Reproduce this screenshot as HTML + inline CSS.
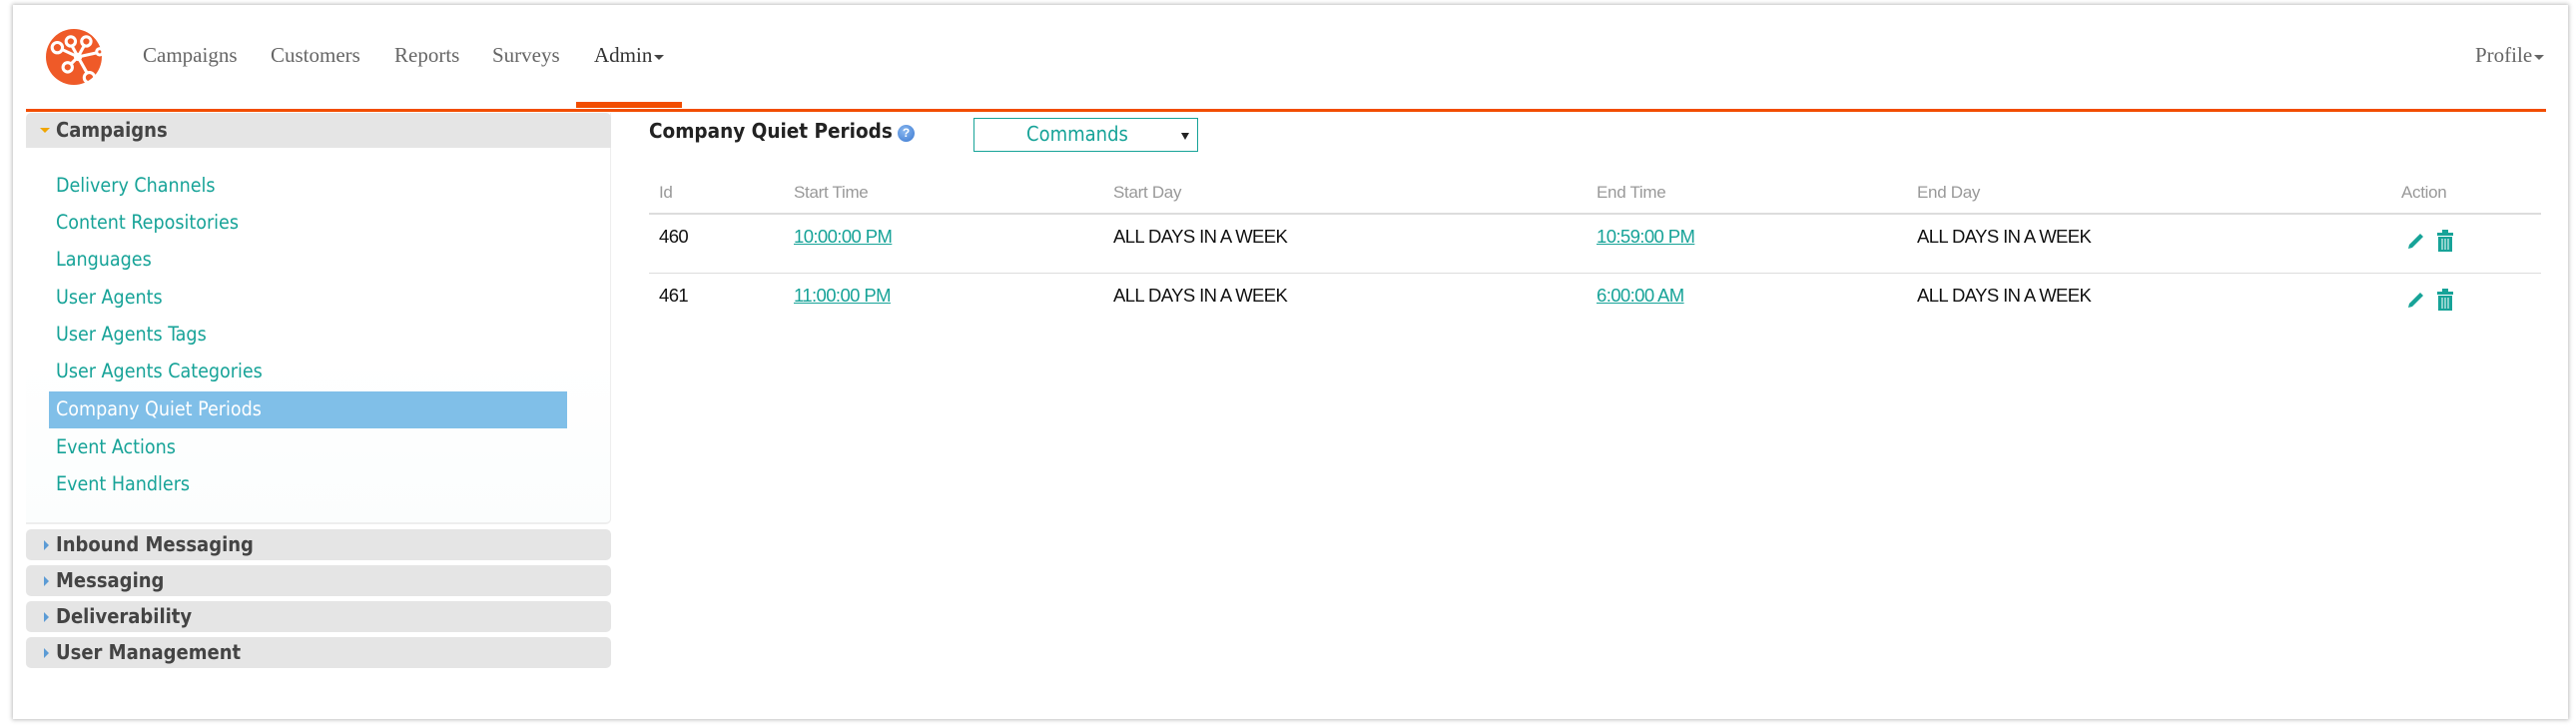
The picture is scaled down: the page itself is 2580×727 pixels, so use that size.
<!DOCTYPE html>
<html><head><meta charset="utf-8"><style>
*{margin:0;padding:0;box-sizing:border-box}
body{width:2580px;height:727px;background:#fff;position:relative;overflow:hidden;font-family:"Liberation Sans",sans-serif}
.card{position:absolute;left:13px;top:5px;width:2559px;height:715px;background:#fff;box-shadow:0 0 4px 1px rgba(0,0,0,.25)}
.abs{position:absolute;white-space:nowrap}
.nav{font-family:"Liberation Serif",serif;font-size:21px;color:#666;top:43px}
.caret{display:inline-block;width:0;height:0;border-left:5px solid transparent;border-right:5px solid transparent;border-top:5px solid #666;vertical-align:middle;margin-left:2px}
.sl{position:absolute;left:56px;font-size:19.5px;color:#17a398;font-family:"DejaVu Sans Condensed","DejaVu Sans",sans-serif;white-space:nowrap}
.hdr{position:absolute;left:26px;width:586px;background:#e5e5e5;border-radius:5px;font-family:"DejaVu Sans Condensed","DejaVu Sans",sans-serif;font-weight:bold;font-size:20px;color:#444;padding-left:30px;line-height:31px;height:31px}
.tri{position:absolute;left:18px;top:11px;width:0;height:0;border-top:5px solid transparent;border-bottom:5px solid transparent;border-left:5px solid #5b9bd5}
.th{position:absolute;top:183px;font-size:17px;color:#999;letter-spacing:-.3px}
.td{position:absolute;font-size:18.5px;color:#111;letter-spacing:-.6px}
.lk{color:#17a398;text-decoration:underline}
</style></head><body>
<div class="card"></div>
<svg class="abs" style="left:46px;top:28px" width="58" height="58" viewBox="0 0 56 56">
<circle cx="27" cy="28" r="27" fill="#ef5a28"/>
<g stroke="#fff" stroke-width="3" fill="none">
<circle cx="11" cy="19" r="5"/><circle cx="24" cy="13" r="4.5"/><circle cx="39" cy="13" r="4.5"/><circle cx="21" cy="38" r="4.5"/><circle cx="42" cy="48" r="5"/><circle cx="52" cy="23" r="3"/>
<path d="M16 21 L31 28 M25 17 L31 28 M37 17 L31 28 M24 35 L31 28 M31 28 L40 44 M31 28 L49 24"/>
</g><circle cx="31" cy="28" r="4" fill="#fff"/></svg>
<div class="abs nav" style="left:143px">Campaigns</div>
<div class="abs nav" style="left:271px">Customers</div>
<div class="abs nav" style="left:395px">Reports</div>
<div class="abs nav" style="left:493px">Surveys</div>
<div class="abs nav" style="left:595px;color:#333">Admin<span class="caret" style="border-top-color:#444"></span></div>
<div class="abs nav" style="left:2479px">Profile<span class="caret"></span></div>
<div class="abs" style="left:577px;top:102px;width:106px;height:6px;background:#f24d00"></div>
<div class="abs" style="left:26px;top:109px;width:2524px;height:3px;background:#f24d00"></div>

<div class="abs" style="left:26px;top:113px;width:586px;height:412px;border-right:1px solid #eee;border-bottom:2px solid #eee;border-radius:0 0 5px 0;background:linear-gradient(#fff 60%,#fbfdfd)"></div>
<div class="hdr" style="top:113px;height:35px;line-height:35px;border-radius:5px 5px 0 0"><div style="position:absolute;left:14px;top:15px;border-left:5px solid transparent;border-right:5px solid transparent;border-top:5px solid #f0a500"></div>Campaigns</div>
<div class="sl" style="top:174px">Delivery Channels</div>
<div class="sl" style="top:211px">Content Repositories</div>
<div class="sl" style="top:248px">Languages</div>
<div class="sl" style="top:286px">User Agents</div>
<div class="sl" style="top:323px">User Agents Tags</div>
<div class="abs" style="left:49px;top:392px;width:519px;height:37px;background:#80bfe8"></div>
<div class="sl" style="top:360px">User Agents Categories</div>
<div class="sl" style="top:398px;color:#fff">Company Quiet Periods</div>
<div class="sl" style="top:436px">Event Actions</div>
<div class="sl" style="top:473px">Event Handlers</div>
<div class="hdr" style="top:530px"><div class="tri"></div>Inbound Messaging</div>
<div class="hdr" style="top:566px"><div class="tri"></div>Messaging</div>
<div class="hdr" style="top:602px"><div class="tri"></div>Deliverability</div>
<div class="hdr" style="top:638px"><div class="tri"></div>User Management</div>

<div class="abs" style="left:650px;top:119px;font-family:'DejaVu Sans Condensed','DejaVu Sans',sans-serif;font-weight:bold;font-size:20.5px;color:#222">Company Quiet Periods</div>
<div class="abs" style="left:899px;top:125px;width:17px;height:17px;border-radius:50%;background:radial-gradient(circle at 40% 35%,#8ab8f0,#3a78d0);color:#fff;font-size:12px;font-weight:bold;text-align:center;line-height:17px">?</div>
<div class="abs" style="left:975px;top:118px;width:225px;height:34px;border:1.5px solid #17a398;font-family:'DejaVu Sans Condensed','DejaVu Sans',sans-serif;font-size:20px;color:#17a398;line-height:31px;padding-left:52px">Commands<span style="position:absolute;right:8px;top:14px;border-left:4px solid transparent;border-right:4px solid transparent;border-top:7px solid #222"></span></div>

<div class="th" style="left:660px">Id</div>
<div class="th" style="left:795px">Start Time</div>
<div class="th" style="left:1115px">Start Day</div>
<div class="th" style="left:1599px">End Time</div>
<div class="th" style="left:1920px">End Day</div>
<div class="th" style="left:2405px">Action</div>
<div class="abs" style="left:650px;top:213px;width:1895px;height:2px;background:#ddd"></div>
<div class="abs" style="left:650px;top:273px;width:1895px;height:1px;background:#ddd"></div>
<div class="td" style="left:660px;top:226px">460</div>
<div class="td lk" style="left:795px;top:226px">10:00:00 PM</div>
<div class="td" style="left:1115px;top:226px">ALL DAYS IN A WEEK</div>
<div class="td lk" style="left:1599px;top:226px">10:59:00 PM</div>
<div class="td" style="left:1920px;top:226px">ALL DAYS IN A WEEK</div>
<div class="td" style="left:660px;top:285px">461</div>
<div class="td lk" style="left:795px;top:285px">11:00:00 PM</div>
<div class="td" style="left:1115px;top:285px">ALL DAYS IN A WEEK</div>
<div class="td lk" style="left:1599px;top:285px">6:00:00 AM</div>
<div class="td" style="left:1920px;top:285px">ALL DAYS IN A WEEK</div>

<svg class="abs" style="left:2410px;top:231px" width="20" height="20" viewBox="0 0 20 20"><path d="M2 18 L3 14 L14 3 L17 6 L6 17 Z" fill="#17a398"/></svg>
<svg class="abs" style="left:2440px;top:230px" width="18" height="22" viewBox="0 0 18 22"><rect x="6" y="0" width="6" height="3" fill="#17a398"/><rect x="1" y="3" width="16" height="3" fill="#17a398"/><rect x="2" y="7" width="14" height="15" fill="#17a398"/><path d="M6 9v11M9 9v11M12 9v11" stroke="#fff" stroke-width="1"/></svg>
<svg class="abs" style="left:2410px;top:290px" width="20" height="20" viewBox="0 0 20 20"><path d="M2 18 L3 14 L14 3 L17 6 L6 17 Z" fill="#17a398"/></svg>
<svg class="abs" style="left:2440px;top:289px" width="18" height="22" viewBox="0 0 18 22"><rect x="6" y="0" width="6" height="3" fill="#17a398"/><rect x="1" y="3" width="16" height="3" fill="#17a398"/><rect x="2" y="7" width="14" height="15" fill="#17a398"/><path d="M6 9v11M9 9v11M12 9v11" stroke="#fff" stroke-width="1"/></svg>
</body></html>
